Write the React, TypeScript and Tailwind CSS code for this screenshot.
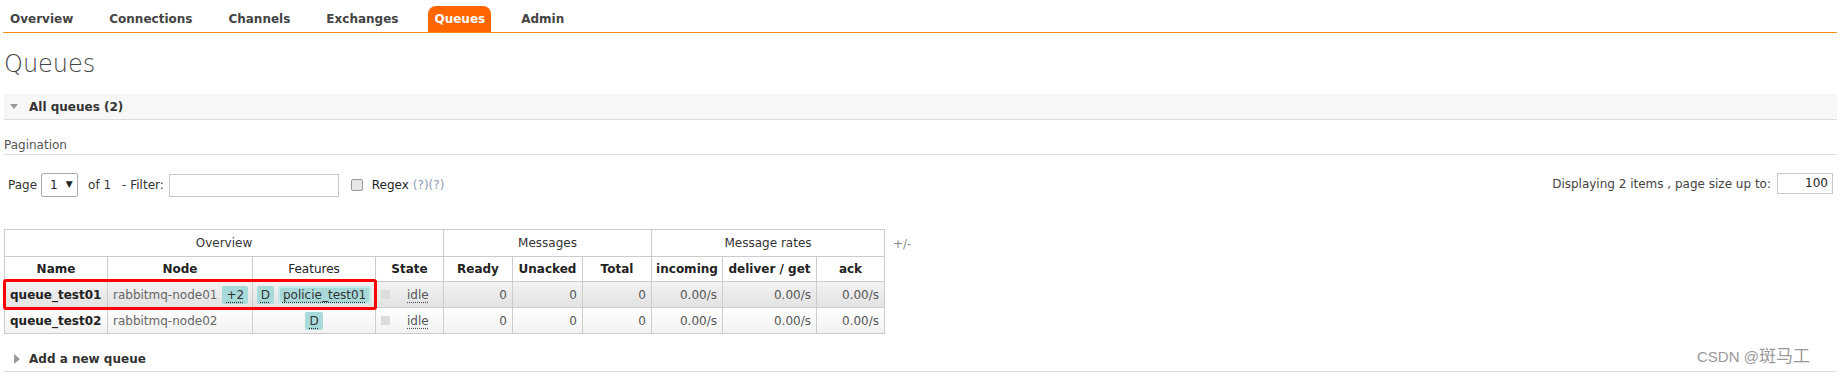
import React from "react";

const navItems = ["Overview", "Connections", "Channels", "Exchanges", "Queues", "Admin"];

function Badge({ children, policy }: { children: React.ReactNode; policy?: boolean }) {
  return (
    <span
      className={
        "inline-flex h-[18px] items-center whitespace-nowrap rounded-[2px] bg-[#a9dada] text-[#333] " +
        (policy ? "border-2 border-[#c6eaea] px-[3px]" : "px-[4px]")
      }
    >
      <span className="underline decoration-dotted decoration-[#333] underline-offset-[3px]">{children}</span>
    </span>
  );
}

type Row = { name: string; node: string; extra?: string; policy?: string };

const rows: Row[] = [
  { name: "queue_test01", node: "rabbitmq-node01", extra: "+2", policy: "policie_test01" },
  { name: "queue_test02", node: "rabbitmq-node02" },
];

export default function App() {
  return (
    <div className="relative h-[376px] w-[1842px] overflow-hidden bg-white font-['DejaVu_Sans',Verdana,sans-serif] text-[12px] text-[#333]">
      {/* top menu */}
      <div className="pt-[6px]">
        <ul className="ml-[3px] mr-[5px] flex h-[27px] border-b border-[#ff8c1a] pl-[1px]">
          {navItems.map((item) => (
            <li key={item} className="mr-[24px]">
              <a
                className={
                  "block h-[26px] px-[6px] font-bold leading-[26px] " +
                  (item === "Queues" ? "rounded-t-[8px] bg-[#ff6600] text-white" : "text-[#444]")
                }
              >
                {item}
              </a>
            </li>
          ))}
        </ul>
      </div>

      <div className="pl-[4px] pr-[5px]">
        <h1 className="mt-[16px] h-[30px] text-[24px] font-light leading-[30px] text-[#444]">Queues</h1>

        {/* section header */}
        <div className="mt-[15px] flex h-[26px] items-center border-b border-[#ddd] bg-[#f7f7f7] pl-[6px]">
          <span className="h-0 w-0 border-x-[4px] border-t-[5px] border-x-transparent border-t-[#999]" />
          <span className="ml-[11px] font-bold text-[#333]">All queues (2)</span>
        </div>

        <div className="mt-[16px] h-[19px] border-b border-[#ddd] pt-[1px] leading-[16px] text-[#555]">Pagination</div>

        {/* pagination controls */}
        <div className="mt-[18px] flex h-[24px] items-center">
          <span className="ml-[4px]">Page</span>
          <div className="ml-[4px] flex h-[24px] w-[37px] items-center rounded-[2px] border border-[#a9a9a9] pl-[8px] text-[#222]">
            <span>1</span>
            <span className="ml-[8px] text-[9px]">▼</span>
          </div>
          <span className="ml-[10px]">of 1</span>
          <span className="ml-[11px]">- Filter:</span>
          <div className="ml-[5px] h-[23px] w-[170px] border border-[#c8c8c8]" />
          <span className="ml-[12px] h-[12px] w-[12px] rounded-[2px] border border-[#999] bg-[#e6e6e6]" />
          <span className="ml-[9px] text-[#222]">Regex</span>
          <span className="ml-[4px] text-[#8e9cb4]">(?)(?)</span>

          <div className="ml-auto mr-[4px] flex items-center self-start">
            <span className="text-[#444]">Displaying 2 items , page size up to:</span>
            <div className="ml-[6px] h-[21px] w-[56px] border border-[#c8c8c8] pr-[4px] text-right leading-[19px] text-[#222]">
              100
            </div>
          </div>
        </div>

        {/* queues table */}
        <div className="mt-[32px] flex items-start">
          <table className="w-[881px] table-fixed border-collapse whitespace-nowrap text-[#333]">
            <colgroup>
              <col className="w-[103px]" />
              <col className="w-[145px]" />
              <col className="w-[123px]" />
              <col className="w-[68px]" />
              <col className="w-[69px]" />
              <col className="w-[70px]" />
              <col className="w-[69px]" />
              <col className="w-[71px]" />
              <col className="w-[94px]" />
              <col className="w-[68px]" />
            </colgroup>
            <thead>
              <tr className="h-[27px]">
                <th colSpan={4} className="border border-[#ccc] p-0 font-normal">Overview</th>
                <th colSpan={3} className="border border-[#ccc] p-0 font-normal">Messages</th>
                <th colSpan={3} className="border border-[#ccc] p-0 font-normal">Message rates</th>
              </tr>
              <tr className="h-[25px] text-[#222]">
                <th className="border border-[#ccc] p-0">Name</th>
                <th className="border border-[#ccc] p-0">Node</th>
                <th className="border border-[#ccc] p-0 font-normal">Features</th>
                <th className="border border-[#ccc] p-0">State</th>
                <th className="border border-[#ccc] p-0">Ready</th>
                <th className="border border-[#ccc] p-0">Unacked</th>
                <th className="border border-[#ccc] p-0">Total</th>
                <th className="border border-[#ccc] p-0">incoming</th>
                <th className="border border-[#ccc] p-0">deliver / get</th>
                <th className="border border-[#ccc] p-0">ack</th>
              </tr>
            </thead>
            <tbody>
              {rows.map((r, i) => (
                <tr
                  key={r.name}
                  className={
                    "h-[26px] " +
                    (i === 0
                      ? "bg-gradient-to-b from-[#f3f3f3] to-[#e2e2e2]"
                      : "bg-gradient-to-b from-[#ffffff] to-[#f1f1f1]")
                  }
                >
                  <td className="border border-[#ccc] px-[5px] py-0 font-bold text-[#222]">{r.name}</td>
                  <td className="border border-[#ccc] px-[5px] py-0 text-[#666]">
                    <div className="flex items-center">
                      <span>{r.node}</span>
                      {r.extra && (
                        <span className="ml-[5px]">
                          <Badge>{r.extra}</Badge>
                        </span>
                      )}
                    </div>
                  </td>
                  <td className="border border-[#ccc] p-0">
                    <div className="flex items-center justify-center gap-[4px]">
                      <Badge>D</Badge>
                      {r.policy && <Badge policy>{r.policy}</Badge>}
                    </div>
                  </td>
                  <td className="border border-[#ccc] p-0">
                    <div className="flex items-center pl-[5px]">
                      <span className="h-[9px] w-[9px] bg-[#dcdcdc]" />
                      <span className="ml-[17px] text-[#555] underline decoration-dotted underline-offset-[3px]">idle</span>
                    </div>
                  </td>
                  <td className="border border-[#ccc] px-[5px] py-0 text-right text-[#555]">0</td>
                  <td className="border border-[#ccc] px-[5px] py-0 text-right text-[#555]">0</td>
                  <td className="border border-[#ccc] px-[5px] py-0 text-right text-[#555]">0</td>
                  <td className="border border-[#ccc] px-[5px] py-0 text-right text-[#555]">0.00/s</td>
                  <td className="border border-[#ccc] px-[5px] py-0 text-right text-[#555]">0.00/s</td>
                  <td className="border border-[#ccc] px-[5px] py-0 text-right text-[#555]">0.00/s</td>
                </tr>
              ))}
            </tbody>
          </table>
          <span className="ml-[8px] mt-[6px] text-[#888]">+/-</span>
        </div>

        {/* add queue section */}
        <div className="mt-[12px] flex h-[26px] items-center border-b border-[#ddd] pl-[10px]">
          <span className="h-0 w-0 border-y-[5px] border-l-[6px] border-y-transparent border-l-[#999]" />
          <span className="ml-[9px] font-bold text-[#333]">Add a new queue</span>
        </div>
      </div>

      {/* annotation around first row */}
      <div className="absolute left-[3px] top-[279px] h-[31px] w-[374px] rounded-[3px] border-[3px] border-[#ff0000]" />

      {/* watermark */}
      <div className="absolute left-[1697px] top-[342px] flex items-baseline text-[#9a9a9a]">
        <span className="font-['Liberation_Sans',sans-serif] text-[15px]">CSDN @</span>
        <span className="font-['Noto_Sans_CJK_SC',sans-serif] text-[17px]">斑马工</span>
      </div>
    </div>
  );
}
